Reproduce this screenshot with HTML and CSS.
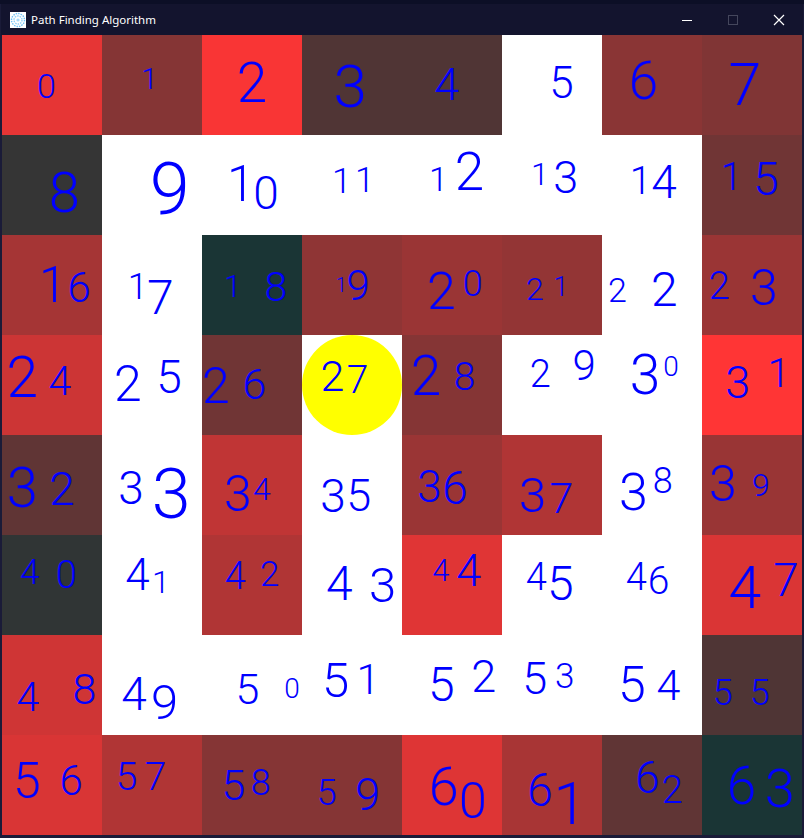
FILE: index.html
```html
<!DOCTYPE html>
<html lang="en">
<head>
    <meta charset="UTF-8">
    <meta name="viewport" content="width=device-width, initial-scale=1.0">
    <title>Path Finding Algorithm</title>
    <link rel="stylesheet" href="styles.css">
</head>
<body>

<div class="window">
    <div class="titlebar">
        <svg class="app-icon" width="16" height="16" viewBox="0 0 16 16">
            <rect width="16" height="16" fill="#fff"/>
            <circle cx="8" cy="8" r="6.5" fill="none" stroke="#6cc0f5" stroke-width="1.4" stroke-dasharray="1.5 1"/>
            <circle cx="8" cy="8" r="4" fill="none" stroke="#8ed0f8" stroke-width="1.4" stroke-dasharray="1.5 1"/>
            <circle cx="8" cy="8" r="1.6" fill="#a5dafa"/>
        </svg>
        <span class="title">Path Finding Algorithm</span>
        <div class="controls">
            <svg width="12" height="12" viewBox="0 0 12 12"><path d="M1 6.5H11" stroke="#fff" stroke-width="1"/></svg>
            <svg width="12" height="12" viewBox="0 0 12 12"><rect x="1.5" y="1.5" width="9" height="9" fill="none" stroke="#44465c" stroke-width="1"/></svg>
            <svg width="12" height="12" viewBox="0 0 12 12"><path d="M1 1L11 11M11 1L1 11" stroke="#fff" stroke-width="1.2"/></svg>
        </div>
    </div>

    <div class="board">
        <div class="cell n0" style="--r:230"><span>0</span></div>
        <div class="cell n1" style="--r:133"><span>1</span></div>
        <div class="cell n2" style="--r:249"><span>2</span></div>
        <div class="cell n3" style="--r:80"><span>3</span></div>
        <div class="cell n4" style="--r:80"><span>4</span></div>
        <div class="cell open n5"><span>5</span></div>
        <div class="cell n6" style="--r:138"><span>6</span></div>
        <div class="cell n7" style="--r:128"><span>7</span></div>

        <div class="cell n8" style="--r:53"><span>8</span></div>
        <div class="cell open n9"><span>9</span></div>
        <div class="cell open n10"><span>1</span><span>0</span></div>
        <div class="cell open n11"><span>1</span><span>1</span></div>
        <div class="cell open n12"><span>1</span><span>2</span></div>
        <div class="cell open n13"><span>1</span><span>3</span></div>
        <div class="cell open n14"><span>1</span><span>4</span></div>
        <div class="cell n15" style="--r:112"><span>1</span><span>5</span></div>

        <div class="cell n16" style="--r:165"><span>1</span><span>6</span></div>
        <div class="cell open n17"><span>1</span><span>7</span></div>
        <div class="cell n18 teal"><span>1</span><span>8</span></div>
        <div class="cell n19" style="--r:143"><span>1</span><span>9</span></div>
        <div class="cell n20" style="--r:154"><span>2</span><span>0</span></div>
        <div class="cell n21" style="--r:147"><span>2</span><span>1</span></div>
        <div class="cell open n22"><span>2</span><span>2</span></div>
        <div class="cell n23" style="--r:154"><span>2</span><span>3</span></div>

        <div class="cell n24" style="--r:204"><span>2</span><span>4</span></div>
        <div class="cell open n25"><span>2</span><span>5</span></div>
        <div class="cell n26" style="--r:112"><span>2</span><span>6</span></div>
        <div class="cell open n27"><div class="walker"></div><span>2</span><span>7</span></div>
        <div class="cell n28" style="--r:133"><span>2</span><span>8</span></div>
        <div class="cell open n29"><span>2</span><span>9</span></div>
        <div class="cell open n30"><span>3</span><span>0</span></div>
        <div class="cell n31" style="--r:255"><span>3</span><span>1</span></div>

        <div class="cell n32" style="--r:96"><span>3</span><span>2</span></div>
        <div class="cell open n33"><span>3</span><span>3</span></div>
        <div class="cell n34" style="--r:192"><span>3</span><span>4</span></div>
        <div class="cell open n35"><span>3</span><span>5</span></div>
        <div class="cell n36" style="--r:154"><span>3</span><span>6</span></div>
        <div class="cell n37" style="--r:176"><span>3</span><span>7</span></div>
        <div class="cell open n38"><span>3</span><span>8</span></div>
        <div class="cell n39" style="--r:153"><span>3</span><span>9</span></div>

        <div class="cell n40" style="--r:48"><span>4</span><span>0</span></div>
        <div class="cell open n41"><span>4</span><span>1</span></div>
        <div class="cell n42" style="--r:176"><span>4</span><span>2</span></div>
        <div class="cell open n43"><span>4</span><span>3</span></div>
        <div class="cell n44" style="--r:224"><span>4</span><span>4</span></div>
        <div class="cell open n45"><span>4</span><span>5</span></div>
        <div class="cell open n46"><span>4</span><span>6</span></div>
        <div class="cell n47" style="--r:218"><span>4</span><span>7</span></div>

        <div class="cell n48" style="--r:207"><span>4</span><span>8</span></div>
        <div class="cell open n49"><span>4</span><span>9</span></div>
        <div class="cell open n50"><span>5</span><span>0</span></div>
        <div class="cell open n51"><span>5</span><span>1</span></div>
        <div class="cell open n52"><span>5</span><span>2</span></div>
        <div class="cell open n53"><span>5</span><span>3</span></div>
        <div class="cell open n54"><span>5</span><span>4</span></div>
        <div class="cell n55" style="--r:79"><span>5</span><span>5</span></div>

        <div class="cell n56" style="--r:217"><span>5</span><span>6</span></div>
        <div class="cell n57" style="--r:176"><span>5</span><span>7</span></div>
        <div class="cell n58" style="--r:133"><span>5</span><span>8</span></div>
        <div class="cell n59" style="--r:133"><span>5</span><span>9</span></div>
        <div class="cell n60" style="--r:222"><span>6</span><span>0</span></div>
        <div class="cell n61" style="--r:168"><span>6</span><span>1</span></div>
        <div class="cell n62" style="--r:96"><span>6</span><span>2</span></div>
        <div class="cell n63 teal"><span>6</span><span>3</span></div>
    </div>
</div>

</body>
</html>
```

FILE: styles.css
```css
body {
    margin: 0;
    background-color: #0c0f26;
    font-family: "Noto Sans", sans-serif;
    overflow: hidden;
}

.window {
    margin-top: 4px;
    padding: 0 2px 3px;
    background-color: #1a1b38;
}

.titlebar {
    display: flex;
    align-items: center;
    height: 31px;
    margin: 0 -1px;
    padding: 0 0 0 9px;
    background-color: #13142e;
    color: #fff;
}

.app-icon {
    margin-right: 5px;
}

.title {
    font-size: 11.5px;
}

.controls {
    display: flex;
    align-items: center;
    gap: 34px;
    margin-left: auto;
    margin-right: 18px;
}

.board {
    display: grid;
    grid-template-columns: repeat(8, 100px);
    grid-auto-rows: 100px;
    overflow: hidden;
}

/* heat value of the tile goes in --r */
.cell {
    display: grid;
    grid-template: 100px / 100px;
    background-color: rgb(var(--r), 53, 53);
    color: #0000ff;
    font-family: Roboto, "Liberation Sans", sans-serif;
    font-weight: 300;
}

.cell.open {
    background-color: #fff;
}

.cell.teal {
    background-color: #1a3535;
}

.cell span {
    grid-area: 1 / 1;
    justify-self: start;
    align-self: start;
    line-height: 0.72;
    margin-top: var(--y1);
    margin-left: calc(var(--x1) - 0.06em);
    font-size: var(--s1);
}

.cell span + span {
    margin-top: var(--y2);
    margin-left: calc(var(--x2) - 0.06em);
    font-size: var(--s2);
}

.walker {
    grid-area: 1 / 1;
    border-radius: 50%;
    background-color: #ff0;
}

/* where each number was written inside its tile */
.n0 { --x1: 37px; --y1: 39px; --s1: 34px; }
.n1 { --x1: 41px; --y1: 33px; --s1: 30px; }
.n2 { --x1: 38px; --y1: 29px; --s1: 55px; }
.n3 { --x1: 35px; --y1: 30px; --s1: 60px; }
.n4 { --x1: 35px; --y1: 34px; --s1: 45px; }
.n5 { --x1: 50px; --y1: 33px; --s1: 44px; }
.n6 { --x1: 30px; --y1: 27px; --s1: 53px; }
.n7 { --x1: 30px; --y1: 29px; --s1: 59px; }
.n8 { --x1: 50px; --y1: 38px; --s1: 56px; }
.n9 { --x1: 52px; --y1: 29px; --s1: 72px; }
.n10 { --x1: 28px; --y1: 31px; --s1: 50px; --x2: 54px; --y2: 42px; --s2: 46px; }
.n11 { --x1: 32px; --y1: 34px; --s1: 35px; --x2: 55px; --y2: 33px; --s2: 35px; }
.n12 { --x1: 29px; --y1: 32px; --s1: 34px; --x2: 56px; --y2: 18px; --s2: 53px; }
.n13 { --x1: 31px; --y1: 28px; --s1: 32px; --x2: 54px; --y2: 27px; --s2: 45px; }
.n14 { --x1: 30px; --y1: 32px; --s1: 39px; --x2: 52px; --y2: 31px; --s2: 46px; }
.n15 { --x1: 21px; --y1: 28px; --s1: 39px; --x2: 54px; --y2: 28px; --s2: 46px; }
.n16 { --x1: 40px; --y1: 32px; --s1: 50px; --x2: 68px; --y2: 38px; --s2: 42px; }
.n17 { --x1: 28px; --y1: 40px; --s1: 36px; --x2: 48px; --y2: 46px; --s2: 48px; }
.n18 { --x1: 24px; --y1: 41px; --s1: 31px; --x2: 65px; --y2: 38px; --s2: 41px; }
.n19 { --x1: 35px; --y1: 43px; --s1: 20px; --x2: 47px; --y2: 36px; --s2: 42px; }
.n20 { --x1: 28px; --y1: 38px; --s1: 52px; --x2: 63px; --y2: 37px; --s2: 36px; }
.n21 { --x1: 26px; --y1: 43px; --s1: 32px; --x2: 53px; --y2: 43px; --s2: 27px; }
.n22 { --x1: 8px; --y1: 43px; --s1: 34px; --x2: 52px; --y2: 38px; --s2: 48px; }
.n23 { --x1: 9px; --y1: 38px; --s1: 38px; --x2: 51px; --y2: 35px; --s2: 50px; }
.n24 { --x1: 8px; --y1: 22px; --s1: 57px; --x2: 49px; --y2: 32px; --s2: 41px; }
.n25 { --x1: 15px; --y1: 31px; --s1: 50px; --x2: 57px; --y2: 26px; --s2: 46px; }
.n26 { --x1: 3px; --y1: 33px; --s1: 50px; --x2: 43px; --y2: 34px; --s2: 43px; }
.n27 { --x1: 21px; --y1: 26px; --s1: 43px; --x2: 47px; --y2: 31px; --s2: 39px; }
.n28 { --x1: 12px; --y1: 22px; --s1: 55px; --x2: 54px; --y2: 28px; --s2: 39px; }
.n29 { --x1: 30px; --y1: 26px; --s1: 38px; --x2: 73px; --y2: 16px; --s2: 42px; }
.n30 { --x1: 31px; --y1: 21px; --s1: 55px; --x2: 63px; --y2: 22px; --s2: 28px; }
.n31 { --x1: 26px; --y1: 32px; --s1: 45px; --x2: 68px; --y2: 24px; --s2: 41px; }
.n32 { --x1: 8px; --y1: 33px; --s1: 56px; --x2: 50px; --y2: 38px; --s2: 46px; }
.n33 { --x1: 19px; --y1: 37px; --s1: 46px; --x2: 54px; --y2: 34px; --s2: 70px; }
.n34 { --x1: 25px; --y1: 41px; --s1: 50px; --x2: 53px; --y2: 43px; --s2: 32px; }
.n35 { --x1: 21px; --y1: 45px; --s1: 46px; --x2: 47px; --y2: 45px; --s2: 45px; }
.n36 { --x1: 18px; --y1: 37px; --s1: 44px; --x2: 43px; --y2: 37px; --s2: 46px; }
.n37 { --x1: 20px; --y1: 43px; --s1: 49px; --x2: 50px; --y2: 48px; --s2: 43px; }
.n38 { --x1: 20px; --y1: 39px; --s1: 52px; --x2: 53px; --y2: 34px; --s2: 36px; }
.n39 { --x1: 10px; --y1: 31px; --s1: 50px; --x2: 52px; --y2: 39px; --s2: 32px; }
.n40 { --x1: 20px; --y1: 25px; --s1: 35px; --x2: 56px; --y2: 27px; --s2: 38px; }
.n41 { --x1: 26px; --y1: 25px; --s1: 44px; --x2: 52px; --y2: 36px; --s2: 32px; }
.n42 { --x1: 25px; --y1: 28px; --s1: 38px; --x2: 60px; --y2: 27px; --s2: 35px; }
.n43 { --x1: 27px; --y1: 32px; --s1: 48px; --x2: 70px; --y2: 33px; --s2: 49px; }
.n44 { --x1: 32px; --y1: 25px; --s1: 31px; --x2: 57px; --y2: 20px; --s2: 45px; }
.n45 { --x1: 26px; --y1: 29px; --s1: 38px; --x2: 48px; --y2: 32px; --s2: 48px; }
.n46 { --x1: 26px; --y1: 29px; --s1: 38px; --x2: 48px; --y2: 32px; --s2: 39px; }
.n47 { --x1: 30px; --y1: 32px; --s1: 59px; --x2: 74px; --y2: 29px; --s2: 46px; }
.n48 { --x1: 17px; --y1: 48px; --s1: 41px; --x2: 73px; --y2: 39px; --s2: 43px; }
.n49 { --x1: 22px; --y1: 43px; --s1: 46px; --x2: 52px; --y2: 50px; --s2: 49px; }
.n50 { --x1: 36px; --y1: 39px; --s1: 43px; --x2: 84px; --y2: 44px; --s2: 28px; }
.n51 { --x1: 23px; --y1: 28px; --s1: 49px; --x2: 57px; --y2: 30px; --s2: 42px; }
.n52 { --x1: 29px; --y1: 33px; --s1: 48px; --x2: 72px; --y2: 26px; --s2: 45px; }
.n53 { --x1: 23px; --y1: 28px; --s1: 45px; --x2: 55px; --y2: 29px; --s2: 35px; }
.n54 { --x1: 19px; --y1: 32px; --s1: 50px; --x2: 57px; --y2: 35px; --s2: 43px; }
.n55 { --x1: 13px; --y1: 46px; --s1: 36px; --x2: 50px; --y2: 46px; --s2: 36px; }
.n56 { --x1: 14px; --y1: 28px; --s1: 50px; --x2: 60px; --y2: 31px; --s2: 42px; }
.n57 { --x1: 16px; --y1: 28px; --s1: 39px; --x2: 45px; --y2: 28px; --s2: 39px; }
.n58 { --x1: 22px; --y1: 35px; --s1: 43px; --x2: 51px; --y2: 36px; --s2: 36px; }
.n59 { --x1: 17px; --y1: 46px; --s1: 36px; --x2: 56px; --y2: 44px; --s2: 45px; }
.n60 { --x1: 30px; --y1: 33px; --s1: 54px; --x2: 60px; --y2: 48px; --s2: 50px; }
.n61 { --x1: 28px; --y1: 39px; --s1: 46px; --x2: 55px; --y2: 47px; --s2: 60px; }
.n62 { --x1: 36px; --y1: 28px; --s1: 44px; --x2: 62px; --y2: 42px; --s2: 38px; }
.n63 { --x1: 28px; --y1: 32px; --s1: 53px; --x2: 66px; --y2: 35px; --s2: 54px; }
```
